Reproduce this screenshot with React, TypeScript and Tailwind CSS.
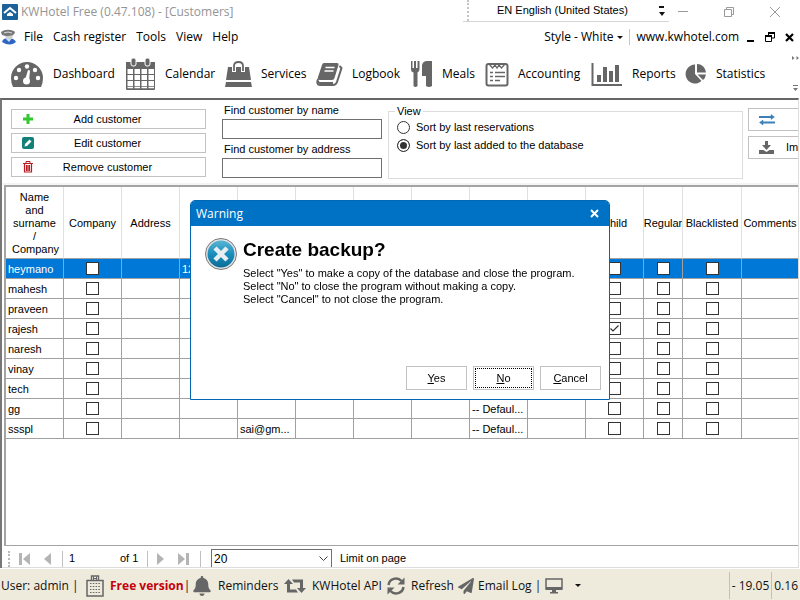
import type { ReactNode } from 'react';
import { FaBell, FaPaperPlane } from 'react-icons/fa';

const UI = "font-['Open_Sans','Noto_Sans',sans-serif] text-xs";

function DashboardIcon() {
  return (
    <svg width="34" height="28" viewBox="0 0 34 28" className="shrink-0">
      <path d="M3 27 Q1 23 1 18 A16 16 0 0 1 33 18 Q33 23 31 27 Z" fill="#666" />
      <g fill="#fff">
        <circle cx="6" cy="18" r="2.2" />
        <circle cx="9" cy="10" r="2.2" />
        <circle cx="17" cy="6.500" r="2.200" />
        <circle cx="25" cy="10" r="2.2" />
        <circle cx="28" cy="18" r="2.2" />
        <circle cx="16.500" cy="21" r="3.500" />
        <path d="M15 20 L18 10 L20 10.500 L19 21 Z" />
      </g>
    </svg>
  );
}

function CalendarIcon() {
  const cols = [3, 10, 17, 24];
  const rows = [11, 17, 23];
  return (
    <svg width="31" height="32" viewBox="0 0 31 32" className="shrink-0">
      <path d="M1 4 H30 V31 Q30 32 29 32 H2 Q1 32 1 31 Z" fill="#666" />
      <rect x="6" y="0" width="5" height="8" rx="2" fill="#666" stroke="#fff" />
      <rect x="20" y="0" width="5" height="8" rx="2" fill="#666" stroke="#fff" />
      {rows.map((y) =>
        cols.map((x) => <rect key={`${x}-${y}`} x={x - 0.5} y={y} width="5.500" height="5" fill="#fff" />),
      )}
      <path d="M2.500 29.500 H29" stroke="#fff" strokeWidth="1.500" strokeDasharray="5.500 1.500" />
    </svg>
  );
}

function BagIcon() {
  return (
    <svg width="27" height="28" viewBox="0 0 27 28" className="shrink-0">
      <path d="M3 7 H24 L26 20 H1 Z M1 22 H26 L27 27 H0 Z" fill="#666" />
      <path d="M9 12 V6 Q9 2 13.500 2 Q18 2 18 6 V12" fill="none" stroke="#fff" strokeWidth="4" />
      <path d="M9 11 V6 Q9 2 13.500 2 Q18 2 18 6 V11" fill="none" stroke="#666" strokeWidth="1.800" />
    </svg>
  );
}

function BookIcon() {
  return (
    <svg width="27" height="25" viewBox="0 0 27 25" className="shrink-0">
      <path d="M8 1 H21 Q23 1 22.500 3 L18.500 16 Q18 18 16 18 H4 Q1 18 2 15 L6 3 Q6.500 1 8 1 Z" fill="#666" />
      <path d="M2 17 Q0 23 4 23 H17 Q20 23 21 20 L25.500 6 L23.500 4" fill="none" stroke="#666" strokeWidth="2" />
      <path d="M2 19 Q2 21 4 21 H17" fill="none" stroke="#666" strokeWidth="2" />
      <path d="M9.500 5.500 H18.500 M8.500 9 H17.500" stroke="#fff" strokeWidth="1.500" />
    </svg>
  );
}

function MealsIcon() {
  return (
    <svg width="23" height="28" viewBox="0 0 23 28" className="shrink-0">
      <path d="M1 1 H2.500 V8 H4 V1 H6 V8 H7.500 V1 H9.500 V9 Q9.500 12 7.500 12.500 V26 Q5.500 28 3.500 26 V12.500 Q1 12 1 9 Z" fill="#666" />
      <path d="M12 5 Q13 1 17 1 H22 V26 Q19 28 16 26 V16 H12 Z" fill="#666" />
    </svg>
  );
}

function AccountingIcon() {
  return (
    <svg width="24" height="25" viewBox="0 0 24 25" className="shrink-0" fill="none" stroke="#666">
      <rect x="1.500" y="2" width="21" height="21.500" rx="2" strokeWidth="2" />
      <path d="M4 2 L7.500 6 L10 3 L12 6 L14 3 L16.500 6 L20 2" strokeWidth="1.300" />
      <path d="M5 10.500 H8 M10 10.500 H20 M5 14.500 H8 M10 14.500 H20" strokeWidth="1.700" />
      <path d="M5 18.500 H8 M10 18.500 H15" strokeWidth="1.700" />
    </svg>
  );
}

function ReportsIcon() {
  return (
    <svg width="32" height="25" viewBox="0 0 32 25" className="shrink-0">
      <path d="M1.500 1 V23 H31" fill="none" stroke="#666" strokeWidth="2" />
      <path d="M6 13 H10 V20 H6 Z M12 5 H16 V20 H12 Z M18 9 H22 V20 H18 Z M24 3 H28 V20 H24 Z" fill="#666" />
    </svg>
  );
}

function StatisticsIcon() {
  return (
    <svg width="22" height="22" viewBox="0 0 22 22" className="shrink-0" fill="#666">
      <path d="M10 1.500 A9.500 9.500 0 1 0 16.500 18 L10 11 Z" />
      <path d="M12 1 A9 9 0 0 1 21 9.500 L12 9.500 Z" />
      <path d="M12.500 11.500 H21 A9 9 0 0 1 18 17 Z" />
    </svg>
  );
}

const tools: { label: string; icon: ReactNode }[] = [
  { label: 'Dashboard', icon: <DashboardIcon /> },
  { label: 'Calendar', icon: <CalendarIcon /> },
  { label: 'Services', icon: <BagIcon /> },
  { label: 'Logbook', icon: <BookIcon /> },
  { label: 'Meals', icon: <MealsIcon /> },
  { label: 'Accounting', icon: <AccountingIcon /> },
  { label: 'Reports', icon: <ReportsIcon /> },
  { label: 'Statistics', icon: <StatisticsIcon /> },
];

function Caret() {
  return (
    <svg width="6" height="3" viewBox="0 0 6 3" className="shrink-0">
      <path d="M0 0 H6 L3 3 Z" fill="#111" />
    </svg>
  );
}

function TitleBar() {
  return (
    <header className="relative flex h-6 shrink-0 items-center pl-0.5">
      <svg width="16" height="16" viewBox="0 0 16 16">
        <rect width="16" height="16" rx="1" fill="#1d6199" />
        <path d="M2 9 L8 4 L14 9" fill="none" stroke="#fff" strokeWidth="2" />
        <path d="M5 12 V10 L8 8 L11 10 V12 Z" fill="#fff" />
      </svg>
      <h1 className="ml-[3px] text-[#949494]">KWHotel Free (0.47.108) - [Customers]</h1>
      <div className="ml-auto flex items-center gap-9 pr-5 text-[#999]">
        <button aria-label="Minimize">
          <svg width="10" height="10" viewBox="0 0 10 10"><path d="M0 4.500 H10" stroke="currentColor" /></svg>
        </button>
        <button aria-label="Restore">
          <svg width="10" height="10" viewBox="0 0 10 10" fill="none" stroke="currentColor">
            <path d="M0.500 2.500 H7.500 V9.500 H0.500 Z M2.500 2.500 V0.500 H9.500 V7.500 H7.500" />
          </svg>
        </button>
        <button aria-label="Close">
          <svg width="10" height="10" viewBox="0 0 10 10"><path d="M0 0 L10 10 M10 0 L0 10" stroke="currentColor" /></svg>
        </button>
      </div>
      <div className="absolute top-0 right-[131px] flex h-[22px] w-[206px] items-center border-b border-[#d4d4d4] bg-white pr-1 font-['Liberation_Sans',Arial,sans-serif] text-[11px]">
        <span className="ml-1 h-full border-l-2 border-dotted border-[#c4c4c4]" />
        <span className="ml-7">EN English (United States)</span>
        <svg width="6" height="10" viewBox="0 0 6 10" className="ml-auto">
          <path d="M0 0 H5 V2 H0 Z M0 6 H6 L3 10 Z" fill="#111" />
        </svg>
      </div>
    </header>
  );
}

function MenuBar() {
  return (
    <nav className="flex h-[26px] shrink-0 items-center">
      <svg width="17" height="16" viewBox="0 0 17 16">
        <path d="M2 13 Q3 9 8 9 Q14 9 16 13 Q10 18 2 13 Z" fill="#2f66c4" />
        <path d="M5 9 L9 13 L12 9 Z" fill="#cfe0f5" />
        <circle cx="9" cy="6" r="4" fill="#cfcfcf" />
        <path d="M1 3 Q6 -1 14 2 Q16 4 13 6 Q7 8 2 6 Z" fill="#777" />
        <path d="M4 4 Q8 2 12 4" fill="none" stroke="#ddd" />
      </svg>
      <div className="ml-[7px] flex gap-2.5">
        {['File', 'Cash register', 'Tools', 'View', 'Help'].map((m) => (
          <button key={m}>{m}</button>
        ))}
      </div>
      <div className="ml-auto flex items-center">
        <button className="flex items-center gap-1">Style - White <Caret /></button>
        <span className="mx-1.5 h-4 border-l border-[#c8c8c8]" />
        <a href="#home">www.kwhotel.com</a>
        <div className="ml-2 flex items-center gap-2.5 pr-1.5">
          <button aria-label="Minimize window">
            <svg width="8" height="10" viewBox="0 0 8 10"><path d="M0 9 H7" stroke="#000" strokeWidth="2" /></svg>
          </button>
          <button aria-label="Restore window">
            <svg width="10" height="10" viewBox="0 0 10 10" fill="none" stroke="#000">
              <path d="M0.500 4 H6.500 V9.500 H0.500 Z M3.500 4 V1 H9.500 V6 H6.500" />
              <path d="M0 4 H7 M3 1 H10" strokeWidth="2" />
            </svg>
          </button>
          <button aria-label="Close window">
            <svg width="9" height="9" viewBox="0 0 9 9"><path d="M1 1 L8 8 M8 1 L1 8" stroke="#000" strokeWidth="2.200" /></svg>
          </button>
        </div>
      </div>
    </nav>
  );
}

function ToolBar() {
  return (
    <div className="flex h-12 shrink-0 items-center pl-2.5">
      <div className="grid flex-1 grid-cols-[115px_100px_91px_94px_75px_106px_94px_auto]">
        {tools.map((t) => (
          <button key={t.label} className="flex items-center gap-[9px] whitespace-nowrap">
            {t.icon}
            {t.label}
          </button>
        ))}
      </div>
      <svg width="10" height="40" viewBox="0 0 10 40" fill="#777">
        <path d="M2 2 L4.500 4 L2 6 Z M6.500 2 L9 4 L6.500 6 Z M3 31 H8 V32 H3 Z M3 34 H8 L5.500 37 Z" />
      </svg>
    </div>
  );
}

function ActionButton({ label, icon }: { label: string; icon: ReactNode }) {
  return (
    <button className="flex h-5 w-[195px] items-center border border-[#c2c2c2] bg-white pl-2.5">
      {icon}
      <span className="flex-1 pr-6 text-center">{label}</span>
    </button>
  );
}

function FilterPanel() {
  return (
    <section className="flex h-[85px] shrink-0 overflow-hidden border-b-2 border-[#f4f4f4] pt-2 pl-[9px]">
      <div className="flex shrink-0 flex-col gap-1 pt-px">
        <ActionButton
          label="Add customer"
          icon={<svg width="12" height="12" viewBox="0 0 12 12"><path d="M4.500 1 H7.500 V4.500 H11 V7.500 H7.500 V11 H4.500 V7.500 H1 V4.500 H4.500 Z" fill="#32c832" /></svg>}
        />
        <ActionButton
          label="Edit customer"
          icon={
            <svg width="12" height="12" viewBox="0 0 12 12">
              <rect width="12" height="12" rx="2" fill="#108078" />
              <path d="M2.500 9.500 L3 7 L7.500 2.500 L9.500 4.500 L5 9 Z" fill="#fff" />
            </svg>
          }
        />
        <ActionButton
          label="Remove customer"
          icon={
            <svg width="12" height="12" viewBox="0 0 12 12" fill="none" stroke="#b81c22">
              <path d="M1 2.500 H11 M4 2.500 V0.500 H8 V2.500" />
              <path d="M2.500 3 V11 H9.500 V3 M4.500 4 V10 M6 4 V10 M7.500 4 V10" strokeWidth="1.200" />
            </svg>
          }
        />
      </div>
      <div className="ml-4 flex w-40 shrink-0 flex-col leading-4">
        <label htmlFor="by-name" className="-mt-1.5 pl-0.5">Find customer by name</label>
        <input id="by-name" className="mt-px h-5 border border-[#707070] bg-white px-1" />
        <label htmlFor="by-address" className="mt-0.5 pl-0.5">Find customer by address</label>
        <input id="by-address" className="mt-px h-5 border border-[#707070] bg-white px-1" />
      </div>
      <fieldset className="-mt-1 ml-1.5 h-[75px] flex-1 border border-[#dcdcdc] pl-2">
        <legend className="-ml-0.5 px-0.5 leading-[14px]">View</legend>
        {['Sort by last reservations', 'Sort by last added to the database'].map((t, i) => (
          <label key={t} className="flex h-[18px] items-center gap-1.5 whitespace-nowrap">
            <input
              type="radio"
              name="sort"
              defaultChecked={i === 1}
              className="size-[13px] appearance-none rounded-full border border-[#333] bg-white checked:bg-[#333] checked:shadow-[inset_0_0_0_2px_#fff]"
            />
            {t}
          </label>
        ))}
      </fieldset>
      <div className="ml-[5px] flex w-[50px] shrink-0 flex-col gap-[5px] overflow-hidden">
        <button aria-label="Exchange" className="flex h-[23px] w-[120px] shrink-0 items-center border border-[#c2c2c2] pl-2.5">
          <svg width="17" height="12" viewBox="0 0 17 12" stroke="#3d80b8" fill="#3d80b8">
            <path d="M0 3 H14 M3 8.500 H16" strokeWidth="2" />
            <path d="M12 0.500 L15.500 3 L12 5.500 Z M4 6 L0.500 8.500 L4 11 Z" strokeWidth="0.500" />
          </svg>
        </button>
        <button className="flex h-[23px] w-[120px] shrink-0 items-center gap-3 border border-[#c2c2c2] pl-2.5">
          <svg width="15" height="14" viewBox="0 0 15 14" fill="#666">
            <path d="M6 0 H9 V4 H12 L7.500 9 L3 4 H6 Z M0 9 H4.500 L7.500 11 L10.500 9 H15 V13 H0 Z" />
          </svg>
          Im
        </button>
      </div>
    </section>
  );
}

type Customer = { name: string; phone?: string; mail?: string; plan?: string; child?: boolean };
const customers: Customer[] = [
  { name: 'heymano', phone: '12' },
  { name: 'mahesh' },
  { name: 'praveen' },
  { name: 'rajesh', child: true },
  { name: 'naresh' },
  { name: 'vinay' },
  { name: 'tech' },
  { name: 'gg', plan: '-- Defaul...' },
  { name: 'ssspl', mail: 'sai@gm...', plan: '-- Defaul...' },
];

const headings = ['Name and surname / Company', 'Company', 'Address', '', '', '', '', '', '', '', 'Child', 'Regular', 'Blacklisted', 'Comments'];

function Tick({ label, checked = false }: { label: string; checked?: boolean }) {
  return (
    <span className="relative mx-auto block size-[13px]">
      <input
        type="checkbox"
        aria-label={label}
        defaultChecked={checked}
        className="peer block size-[13px] appearance-none border border-[#333] bg-white"
      />
      <svg viewBox="0 0 13 13" className="pointer-events-none absolute inset-0 hidden peer-checked:block">
        <path d="M2.500 6.500 L5 9 L10.500 3.500" fill="none" stroke="#333" strokeWidth="1.200" />
      </svg>
    </span>
  );
}

function CustomerTable() {
  return (
    <div className="ml-0.5 min-h-0 flex-1 overflow-hidden border-t-2 border-b border-l-2 border-[#a4a4a4]">
      <table className="w-full table-fixed border-separate border-spacing-0">
        <colgroup>
          {headings.map((_, i) => (
            <col key={i} className={i < 11 ? 'w-[58px]' : i === 11 ? 'w-[39px]' : i === 12 ? 'w-[59px]' : ''} />
          ))}
        </colgroup>
        <thead>
          <tr className="h-[72px]">
            {headings.map((h, i) => (
              <th key={i} className="overflow-hidden border-r border-b border-r-[#e0e0e0] border-b-[#a0a0a0] px-0 pt-px pb-0 font-normal leading-[13px] last:border-r-0">
                <div className={i === 0 ? 'px-1.5' : 'flex justify-center overflow-hidden'}>{h}</div>
              </th>
            ))}
          </tr>
        </thead>
        <tbody>
          {customers.map((c, r) => {
            const cells: ReactNode[] = [
              c.name,
              <Tick label={`${c.name} company`} />,
              '',
              c.phone,
              c.mail,
              '',
              '',
              '',
              c.plan,
              '',
              <Tick label={`${c.name} child`} checked={c.child} />,
              <Tick label={`${c.name} regular`} />,
              <Tick label={`${c.name} blacklisted`} />,
              '',
            ];
            return (
              <tr key={c.name} className={r === 0 ? 'h-5 bg-[#0078d7] text-white' : 'h-5'}>
                {cells.map((cell, i) => (
                  <td key={i} className="overflow-hidden border-r border-b border-[#a0a0a0] px-0.5 py-0 leading-4 whitespace-nowrap last:border-r-0">
                    {cell}
                  </td>
                ))}
              </tr>
            );
          })}
        </tbody>
      </table>
    </div>
  );
}

function PageArrow({ label, last, flip }: { label: string; last?: boolean; flip?: boolean }) {
  return (
    <button aria-label={label} className={flip ? 'rotate-180' : ''}>
      <svg width="12" height="12" viewBox="0 0 12 12" fill="#b4b4b4">
        <path d={last ? 'M0 0 L7 6 L0 12 Z M8 0 H11 V12 H8 Z' : 'M3 0 L10 6 L3 12 Z'} />
      </svg>
    </button>
  );
}

function Pager() {
  return (
    <div className="flex h-[22px] shrink-0 items-center overflow-hidden border-b border-[#dcdcdc] pt-1 pl-1.5">
      <span className="h-4 border-l-2 border-dotted border-[#b8b8b8]" />
      <div className="ml-2 flex items-center gap-3">
        <PageArrow label="First page" last flip />
        <PageArrow label="Previous page" flip />
      </div>
      <span className="ml-2 h-4 border-l border-[#c0c0c0]" />
      <input aria-label="Page" defaultValue="1" className="ml-1.5 w-[51px] bg-transparent" />
      <span className="w-5 whitespace-nowrap">of 1</span>
      <span className="ml-[7px] h-4 border-l border-[#c0c0c0]" />
      <div className="mx-1.5 flex items-center gap-3">
        <PageArrow label="Next page" />
        <PageArrow label="Last page" last />
      </div>
      <span className="ml-1 h-4 border-l border-[#c0c0c0]" />
      <div className="relative ml-2.5 h-5 w-[121px]">
        <select id="limit" className="h-5 w-full appearance-none border border-[#707070] bg-white pl-0.5 text-xs">
          <option>20</option>
        </select>
        <svg width="9" height="6" viewBox="0 0 9 6" className="pointer-events-none absolute top-[7px] right-1">
          <path d="M0.500 0.500 L4.500 4.500 L8.500 0.500" fill="none" stroke="#444" />
        </svg>
      </div>
      <label htmlFor="limit" className="ml-2">Limit on page</label>
    </div>
  );
}

function StatusBar() {
  return (
    <footer className="flex h-[31px] shrink-0 items-center bg-[#eeebdd] pt-0.5 text-[#111]">
      <div className="grid flex-1 grid-cols-[86px_106px_92px_103px_71px_87px_auto] items-center whitespace-nowrap">
        <span className="pl-px">User: admin |</span>
        <button className="flex items-center gap-1.5">
          <svg width="18" height="22" viewBox="0 0 18 22" fill="none" stroke="#666" className="shrink-0">
            <path d="M1 21 V5.500 H17 V21 Z" strokeWidth="1.500" />
            <path d="M5.500 5 V1 H12.500 V5" strokeWidth="1.400" />
            <path d="M7.500 1.500 V5 M10.500 1.500 V5 M7.500 3.500 H10.500" />
            <path d="M4 8.500 H14 M4 11.500 H14 M4 14.500 H14 M4 17.500 H14" strokeWidth="1.200" strokeDasharray="1.500 1.300" />
          </svg>
          <span><b className="text-[#c4000a]">Free version</b>|</span>
        </button>
        <button className="flex items-center gap-1.5"><FaBell size={20} className="shrink-0 text-[#666]" />Reminders</button>
        <button className="flex items-center gap-1.5">
          <svg width="22" height="16" viewBox="0 0 22 16" fill="#666" className="shrink-0">
            <path d="M4.500 1 L9 6 H6 V11.500 H12 L14 14.500 H3 V6 H0 Z M17.500 15 L13 10 H16 V4.500 H10 L8 1.500 H19 V10 H22 Z" />
          </svg>
          KWHotel API
        </button>
        <button className="flex items-center gap-1.5">
          <svg width="18" height="18" viewBox="0 0 18 18" fill="none" stroke="#666" strokeWidth="2.500" className="shrink-0">
            <path d="M1.500 8 A7.500 7.500 0 0 1 14.500 4 M16.500 10 A7.500 7.500 0 0 1 3.500 14" />
            <path d="M17.500 0.500 V7.500 H10.500 Z M0.500 17.500 V10.500 H7.500 Z" fill="#666" stroke="none" />
          </svg>
          Refresh
        </button>
        <button className="flex items-center gap-1"><FaPaperPlane size={16} className="shrink-0 text-[#666]" />Email Log |</button>
        <button aria-label="Screen" className="flex items-center gap-3">
          <svg width="18" height="16" viewBox="0 0 18 16" className="shrink-0">
            <path d="M1 1 H17 V11 H1 Z" fill="none" stroke="#666" strokeWidth="1.500" />
            <path d="M1 9 H17 V12 H1 Z M7 12 H11 V14 H13 V15.500 H5 V14 H7 Z" fill="#666" />
          </svg>
          <Caret />
        </button>
      </div>
      <span className="flex h-[27px] items-center border-l border-[#c4c1b4] px-0.5">- 19.05</span>
      <span className="flex h-[27px] items-center border-l border-[#c4c1b4] px-0.5">0.16</span>
    </footer>
  );
}

function BackupDialog() {
  const button = 'h-6 w-[61px] border border-[#c2c2c2] bg-white';
  return (
    <div className="fixed inset-0 flex items-center justify-center">
      <div role="dialog" aria-labelledby="warning" className="flex h-[200px] w-[420px] flex-col overflow-hidden rounded-t-[5px] border border-[#0067b3] bg-white">
        <div className={`flex h-[25px] shrink-0 items-center justify-between bg-[#0072c6] pr-2.5 pl-[5px] text-white ${UI}`}>
          <span id="warning">Warning</span>
          <button aria-label="Close dialog">
            <svg width="9" height="9" viewBox="0 0 9 9"><path d="M1 1 L8 8 M8 1 L1 8" stroke="#fff" strokeWidth="2" /></svg>
          </button>
        </div>
        <div className="flex flex-1 gap-1.5 pt-3 pl-3.5">
          <svg width="32" height="32" viewBox="0 0 32 32" className="shrink-0">
            <defs>
              <linearGradient id="orb" x1="0" y1="0" x2="0" y2="1">
                <stop offset="0" stopColor="#5ab4d4" />
                <stop offset="0.500" stopColor="#1a8fbc" />
                <stop offset="1" stopColor="#0c6c98" />
              </linearGradient>
            </defs>
            <circle cx="16" cy="16" r="15.500" fill="#e4e4e4" stroke="#777" />
            <circle cx="16" cy="16" r="13.500" fill="url(#orb)" />
            <path d="M10 10 L22 22 M22 10 L10 22" stroke="#e8eef2" strokeWidth="4.500" />
          </svg>
          <div>
            <h2 className="text-[19px] leading-6 font-bold">Create backup?</h2>
            <p className="pt-[5px] leading-[13px] whitespace-nowrap">
              Select "Yes" to make a copy of the database and close the program.<br />
              Select "No" to close the program without making a copy.<br />
              Select "Cancel" to not close the program.
            </p>
          </div>
        </div>
        <div className="flex justify-end gap-1.5 pr-2 pb-[9px]">
          <button className={button}><u>Y</u>es</button>
          <button className={`${button} p-px`}>
            <span className="flex h-full items-center justify-center border border-dotted border-black"><span><u>N</u>o</span></span>
          </button>
          <button className={button}><u>C</u>ancel</button>
        </div>
      </div>
    </div>
  );
}

export default function App() {
  return (
    <div className={`flex h-screen flex-col overflow-hidden bg-white text-black ${UI}`}>
      <TitleBar />
      <MenuBar />
      <ToolBar />
      <main className="mr-px flex min-h-0 flex-1 flex-col border-t-2 border-r border-l-2 border-t-[#666] border-r-[#dcdcdc] border-l-[#777] font-['Liberation_Sans',Arial,sans-serif] text-[11px]">
        <FilterPanel />
        <CustomerTable />
        <Pager />
      </main>
      <div className={`mt-px ${UI}`}>
        <StatusBar />
      </div>
      <div className="font-['Liberation_Sans',Arial,sans-serif] text-[11px]">
        <BackupDialog />
      </div>
    </div>
  );
}
